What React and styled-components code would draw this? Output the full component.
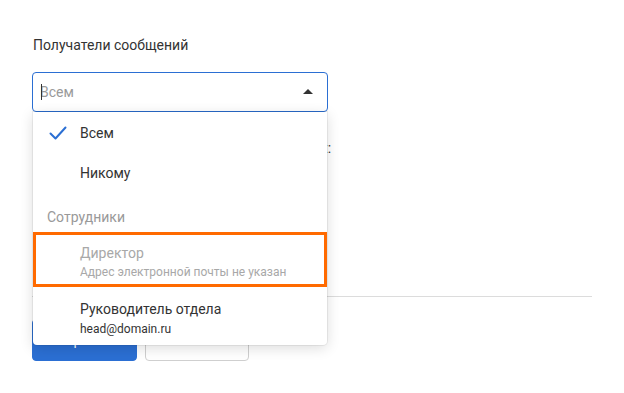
import React from 'react';
import styled, { createGlobalStyle } from 'styled-components';

const GlobalStyle = createGlobalStyle`
	body {
		margin: 0;
		background: #fff;
		font-family: Roboto, "Liberation Sans", Arial, sans-serif;
		color: #333;
	}
`;

const Page = styled.div`
	width: 560px;
	padding: 35px 32px 0;
`;

const FieldLabel = styled.div`
	font-size: 14px;
	line-height: 20px;
	color: #333;
	margin-bottom: 17px;
	padding-left: 1px;
`;

const SelectWrap = styled.div`
	position: relative;
	width: 296px;
	z-index: 2;
`;

const SelectBox = styled.div`
	box-sizing: border-box;
	height: 40px;
	border: 1px solid #2b6fd3;
	border-radius: 4px;
	display: flex;
	align-items: center;
	padding: 0 14px 0 7px;
	background: #fff;
`;

const Placeholder = styled.span`
	flex: 1;
	font-size: 14px;
	color: #9a9a9a;
	position: relative;
`;

const Caret = styled.span`
	position: absolute;
	left: 1px;
	top: 0;
	width: 1px;
	height: 16px;
	background: #333;
`;

const Arrow = styled.span`
	width: 0;
	height: 0;
	border-left: 5px solid transparent;
	border-right: 5px solid transparent;
	border-bottom: 5px solid #333;
	margin-bottom: 1px;
`;

const Menu = styled.div`
	position: absolute;
	top: 40px;
	left: 1px;
	width: 294px;
	background: #fff;
	border-radius: 0 0 4px 4px;
	box-shadow: 0 3px 14px rgba(0, 0, 0, 0.14), 0 0 0 1px rgba(0, 0, 0, 0.06);
	padding-top: 1px;
`;

const Option = styled.div`
	display: flex;
	align-items: center;
	height: 40px;
	font-size: 14px;
	color: #333;
`;

const CheckSlot = styled.span`
	box-sizing: border-box;
	width: 47px;
	display: flex;
	justify-content: flex-end;
	padding-right: 13px;
	color: #2b6fd3;
`;

const GroupHeader = styled.div`
	font-size: 14px;
	line-height: 20px;
	color: #999;
	padding: 14px 0 5px 14px;
`;

const Person = styled.div`
	padding: ${p => (p.$marked ? '12px 0 7px 47px' : '13px 0 8px 47px')};
	outline: ${p => (p.$marked ? '3px solid #ff6a00' : 'none')};
	outline-offset: -3px;
`;

const PersonName = styled.div`
	font-size: 14px;
	line-height: 18px;
	color: ${p => (p.$disabled ? '#a8a8a8' : '#333')};
`;

const PersonMail = styled.div`
	font-size: 12px;
	line-height: 16px;
	margin-top: ${p => (p.$disabled ? 2 : 3)}px;
	color: ${p => (p.$disabled ? '#a8a8a8' : '#333')};
`;

const HiddenField = styled.div`
	font-size: 14px;
	line-height: 20px;
	margin-top: 26px;
	padding-left: 1px;
	white-space: nowrap;
`;

const RadioRow = styled.div`
	font-size: 14px;
	line-height: 20px;
	margin-top: 12px;
	padding-left: 1px;
`;

const Divider = styled.div`
	height: 1px;
	background: #dcdcdc;
	margin-top: 42px;
`;

const Buttons = styled.div`
	display: flex;
	gap: 8px;
	margin-top: 22px;
`;

const Button = styled.button`
	box-sizing: border-box;
	height: 42px;
	width: ${p => p.$w}px;
	border-radius: 4px;
	font-family: inherit;
	font-size: 14px;
	border: 1px solid ${p => (p.$primary ? '#2b6fd3' : '#cfcfcf')};
	background: ${p => (p.$primary ? '#2b6fd3' : '#fff')};
	color: ${p => (p.$primary ? '#fff' : '#333')};
`;

const Check = () => (
	<svg width="18" height="14" viewBox="0 0 18 14" fill="none">
		<path d="M1.5 7.5 L6.5 12.5 L16.5 1.5" stroke="currentColor" strokeWidth="2" strokeLinecap="round" strokeLinejoin="round" />
	</svg>
);

export default function App() {
	return (
		<Page>
			<GlobalStyle />
			<FieldLabel>Получатели сообщений</FieldLabel>
			<SelectWrap>
				<SelectBox>
					<Placeholder>
						<Caret />
						Всем
					</Placeholder>
					<Arrow />
				</SelectBox>
				<Menu>
					<Option>
						<CheckSlot><Check /></CheckSlot>
						Всем
					</Option>
					<Option>
						<CheckSlot />
						Никому
					</Option>
					<GroupHeader>Сотрудники</GroupHeader>
					<Person $marked>
						<PersonName $disabled>Директор</PersonName>
						<PersonMail $disabled>Адрес электронной почты не указан</PersonMail>
					</Person>
					<Person>
						<PersonName>Руководитель отдела</PersonName>
						<PersonMail>head@domain.ru</PersonMail>
					</Person>
				</Menu>
			</SelectWrap>
			<HiddenField>Получать уведомления о новых сообщениях:</HiddenField>
			<RadioRow>На электронную почту</RadioRow>
			<RadioRow>В личный кабинет</RadioRow>
			<RadioRow>По SMS</RadioRow>
			<Divider />
			<Buttons>
				<Button $primary $w={105}>Сохранить</Button>
				<Button $w={104}>Отмена</Button>
			</Buttons>
		</Page>
	);
}
